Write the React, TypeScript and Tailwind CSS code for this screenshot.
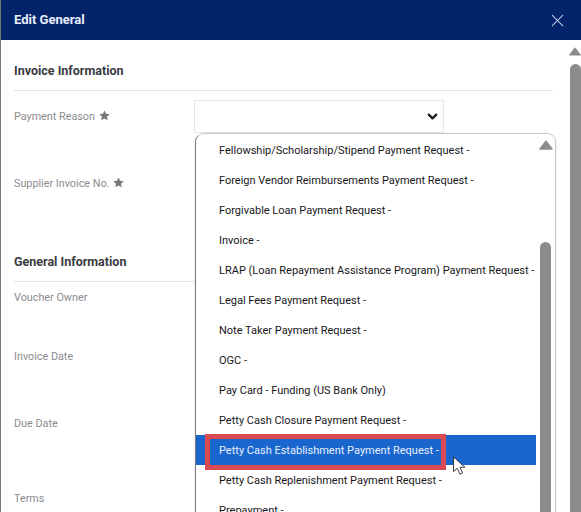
import { ChevronDown, X } from "lucide-react";

const options = [
  "Fellowship/Scholarship/Stipend Payment Request -",
  "Foreign Vendor Reimbursements Payment Request -",
  "Forgivable Loan Payment Request -",
  "Invoice -",
  "LRAP (Loan Repayment Assistance Program) Payment Request -",
  "Legal Fees Payment Request -",
  "Note Taker Payment Request -",
  "OGC -",
  "Pay Card - Funding (US Bank Only)",
  "Petty Cash Closure Payment Request -",
  "Petty Cash Establishment Payment Request -",
  "Petty Cash Replenishment Payment Request -",
  "Prepayment -",
];

function Star() {
  return (
    <svg viewBox="0 0 24 24" className="size-[11px] fill-[#77777c]">
      <path d="M12 1l3.4 7.3 7.9.9-5.9 5.4 1.6 7.9L12 18.6l-7 3.9 1.6-7.9L.7 9.2l7.9-.9z" />
    </svg>
  );
}

function Triangle({ className }: { className: string }) {
  return (
    <svg viewBox="0 0 14 10" className={className}>
      <path d="M7 1.2 13 9H1z" strokeLinejoin="round" stroke="#8c8c8c" strokeWidth="1.5" fill="#8c8c8c" />
    </svg>
  );
}

function Label({ children, star, height }: { children: string; star?: boolean; height: string }) {
  return (
    <div className={`flex items-start gap-[4px] text-[10.8px] leading-[16px] text-[#8b8b8f] ${height}`}>
      {children}
      {star ? <span className="mt-[1px]"><Star /></span> : null}
    </div>
  );
}

export default function App() {
  return (
    <div className="relative h-[512px] w-[581px] overflow-hidden border-l border-l-[#77777c] bg-white font-['Roboto',sans-serif]">
      <header className="flex h-[40px] items-center justify-between bg-[#03246b] pl-[13px] pr-[13px]">
        <h1 className="text-[13px] font-bold text-[#e8eefb]">Edit General</h1>
        <X className="size-[21px] text-[#dbe6f7]" strokeWidth={1.2} />
      </header>

      <div className="flex">
        <main className="w-[552px] shrink-0 pl-[13px]">
          <h2 className="mt-[23px] text-[12.5px] font-bold leading-[16px] text-[#3a3a3f]">Invoice Information</h2>
          <div className="mt-[11px] h-[1px] bg-[#e2e3e5]" />
          <div className="mt-[9px] flex">
            <div className="w-[180px] pt-[9px]">
              <Label star height="h-[67px]">Payment Reason</Label>
              <Label star height="h-[66px]">Supplier Invoice No.</Label>
            </div>
            <div className="flex h-[33px] w-[250px] items-center justify-end border border-[#e6e6e6] pr-[3px]">
              <ChevronDown className="size-[15px] text-[#17171a]" strokeWidth={3.5} />
            </div>
          </div>
          <h2 className="mt-[12px] text-[12.5px] font-bold leading-[16px] text-[#3a3a3f]">General Information</h2>
          <div className="mt-[11px] h-[1px] w-[182px] bg-[#e2e3e5]" />
          <div className="mt-[8px]">
            <Label height="h-[59px]">Voucher Owner</Label>
            <Label height="h-[67px]">Invoice Date</Label>
            <Label height="h-[75px]">Due Date</Label>
            <Label height="h-[16px]">Terms</Label>
          </div>
        </main>
        <div className="ml-[16px] flex w-[12px] shrink-0 flex-col items-center pt-[7px]">
          <Triangle className="h-[9px] w-[12px] shrink-0" />
          <div className="mt-[8px] h-[460px] w-[11px] shrink-0 rounded-t-full bg-[#8c8c8c]" />
        </div>
      </div>

      {/* open select list */}
      <div className="absolute left-[194px] top-[133px] flex h-[400px] w-[361px] rounded-t-[9px] border border-[#c9c9cc] border-l-[#77777c] bg-white pt-[1px] shadow-sm">
        <ul className="w-[340px] text-[11px] text-[#17171a]">
          {options.map((option) => {
            const active = option.startsWith("Petty Cash Establishment");
            return (
              <li
                key={option}
                className={`flex h-[30px] items-center whitespace-nowrap pl-[23px] pt-[2px] ${active ? "bg-[#1a66cf] text-[#e8f0fd]" : ""}`}
              >
                {option}
              </li>
            );
          })}
        </ul>
        <div className="flex flex-1 flex-col items-center pt-[5px]">
          <Triangle className="h-[10px] w-[14px] shrink-0" />
          <div className="mt-[92px] h-[300px] w-[11px] shrink-0 rounded-t-full bg-[#8c8c8c]" />
        </div>
      </div>

      {/* annotation box and pointer */}
      <div className="absolute left-[204px] top-[434px] h-[36px] w-[241px] border-[5px] border-[#d94b50]" />
      <svg viewBox="0 0 14 22" className="absolute left-[451px] top-[456px] h-[20px] w-[14px]">
        <path d="M1 1v16l4-3.5 3 6.5 3-1.4-3-6.2h5.5z" fill="#fff" stroke="#2a2a2a" strokeWidth="1" />
      </svg>
    </div>
  );
}
